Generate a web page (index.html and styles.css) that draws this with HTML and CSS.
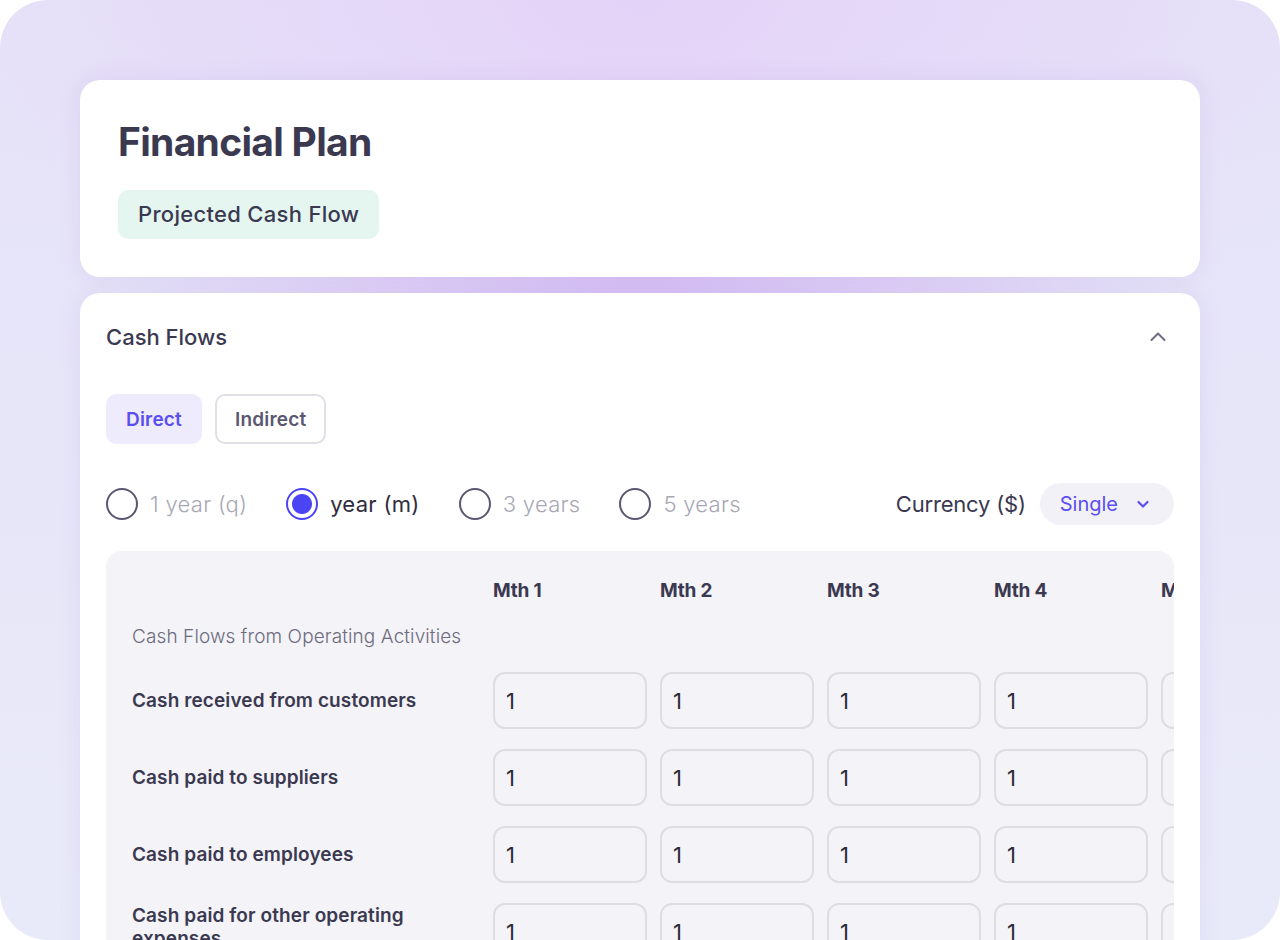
FILE: index.html
```html
<!DOCTYPE html>
<html lang="en">
<head>
  <meta charset="UTF-8">
  <title>Financial Plan – Projected Cash Flow</title>
  <link rel="stylesheet" href="styles.css">
</head>
<body>

  <div class="frame">

    <div class="card planCard">
      <h1>Financial Plan</h1>
      <span class="badge">Projected Cash Flow</span>
    </div>

    <div class="card flowCard">
      <div class="flowHead">
        <h2>Cash Flows</h2>
        <svg class="collapseIcon" width="18" height="18" viewBox="0 0 18 18"><path d="M2.5 12 L9 5.5 L15.5 12" fill="none" stroke="#6e6c7e" stroke-width="2" stroke-linecap="round" stroke-linejoin="round"/></svg>
      </div>

      <div class="tabs">
        <button class="tab active">Direct</button>
        <button class="tab">Indirect</button>
      </div>

      <div class="options">
        <div class="periods">
          <label class="period"><span class="radio"></span>1 year (q)</label>
          <label class="period on"><span class="radio"></span>year (m)</label>
          <label class="period"><span class="radio"></span>3 years</label>
          <label class="period"><span class="radio"></span>5 years</label>
        </div>
        <div class="currency">
          <span>Currency ($)</span>
          <button class="select">Single
            <svg width="14" height="14" viewBox="0 0 14 14"><path d="M2.5 5 L7 9.5 L11.5 5" fill="none" stroke="#5b4ef0" stroke-width="2.2" stroke-linecap="round" stroke-linejoin="round"/></svg>
          </button>
        </div>
      </div>

      <div class="sheet">
        <div class="grid">
          <div class="row head">
            <span></span>
            <span>Mth 1</span><span>Mth 2</span><span>Mth 3</span><span>Mth 4</span><span>Mth 5</span>
          </div>
          <div class="section">Cash Flows from Operating Activities</div>
          <div class="row">
            <span class="label">Cash received from customers</span>
            <input value="1"><input value="1"><input value="1"><input value="1"><input value="1">
          </div>
          <div class="row">
            <span class="label">Cash paid to suppliers</span>
            <input value="1"><input value="1"><input value="1"><input value="1"><input value="1">
          </div>
          <div class="row">
            <span class="label">Cash paid to employees</span>
            <input value="1"><input value="1"><input value="1"><input value="1"><input value="1">
          </div>
          <div class="row">
            <span class="label long">Cash paid for other operating expenses</span>
            <input value="1"><input value="1"><input value="1"><input value="1"><input value="1">
          </div>
        </div>
      </div>
    </div>

  </div>

</body>
</html>
```

FILE: styles.css
```css
body {
  margin: 0;
  background: #fff;
  font-family: Inter, "Noto Sans", sans-serif;
  color: #3b3950;
}
.frame {
  width: 1280px;
  height: 940px;
  box-sizing: border-box;
  padding: 80px 80px 0;
  border-radius: 48px;
  overflow: hidden;
  background:
    radial-gradient(ellipse 520px 90px at 50% 285px, rgba(214,190,244,0.95), rgba(214,190,244,0) 100%),
    radial-gradient(ellipse 700px 360px at 50% 0, #e4d3f8, rgba(228,211,248,0) 100%),
    linear-gradient(180deg, #e6e2f8, #e8eaf9);
}
.card {
  background: #fff;
  border-radius: 20px;
  box-shadow: 0 0 22px rgba(130,110,200,0.12);
}
.planCard {
  padding: 38px 38px;
}
h1 {
  margin: 0 0 24px;
  font-size: 39px;
  line-height: 48px;
  font-weight: 700;
  letter-spacing: -0.7px;
}
.badge {
  display: inline-block;
  height: 49px;
  line-height: 49px;
  padding: 0 20px;
  border-radius: 10px;
  background: #e5f6f0;
  font-size: 22px;
  font-weight: 500;
  letter-spacing: 0.3px;
}
.flowCard {
  margin-top: 16px;
  padding: 26px 26px 0;
  height: 700px;
}
.flowHead {
  display: flex;
  align-items: center;
  justify-content: space-between;
  height: 36px;
}
h2 {
  margin: 0;
  font-size: 22px;
  font-weight: 500;
  letter-spacing: 0;
}
.collapseIcon {
  margin-right: 7px;
}
.tabs {
  display: flex;
  gap: 13px;
  margin-top: 39px;
}
.tab {
  height: 50px;
  padding: 0 18px;
  border: 2px solid #e0dfe6;
  border-radius: 10px;
  background: #fff;
  font-family: inherit;
  font-size: 19px;
  font-weight: 600;
  color: #5a5870;
  letter-spacing: 0.2px;
}
.tab.active {
  background: #eeebfd;
  border-color: #eeebfd;
  color: #5b4ef0;
}
.options {
  display: flex;
  align-items: center;
  justify-content: space-between;
  height: 42px;
  margin-top: 39px;
}
.periods {
  display: flex;
  gap: 39px;
}
.period {
  display: flex;
  align-items: center;
  gap: 12px;
  font-size: 22px;
  font-weight: 300;
  color: #a9a8b5;
  letter-spacing: 0.3px;
}
.period.on {
  color: #2f2d40;
  font-weight: 400;
}
.radio {
  width: 28px;
  height: 28px;
  border: 2px solid #5a5870;
  border-radius: 50%;
  box-sizing: content-box;
}
.period.on .radio {
  border-color: #4b44f5;
  background: radial-gradient(circle, #4b44f5 0 9.5px, #fff 10.5px);
}
.currency {
  display: flex;
  align-items: center;
  gap: 14px;
  font-size: 22px;
  letter-spacing: -0.2px;
}
.select {
  display: flex;
  align-items: center;
  gap: 18px;
  height: 42px;
  padding: 0 24px 0 20px;
  border: 0;
  border-radius: 21px;
  background: #f2f1f8;
  font-family: inherit;
  font-size: 20px;
  color: #5b4ef0;
  letter-spacing: 0;
}
.sheet {
  margin-top: 26px;
  height: 500px;
  background: #f3f3f8;
  border-radius: 16px 16px 0 0;
  overflow: hidden;
  padding: 27px 0 0 26px;
}
.grid {
  width: max-content;
}
.row {
  display: grid;
  grid-template-columns: 348px repeat(5, 154px);
  column-gap: 13px;
  align-items: center;
  height: 57px;
  margin-top: 20px;
}
.row.head {
  height: 24px;
  margin-top: 0;
  font-size: 19px;
  font-weight: 700;
  letter-spacing: -0.2px;
}
.section {
  margin-top: 23px;
  line-height: 24px;
  font-size: 19px;
  font-weight: 300;
  color: #6d6b7d;
  letter-spacing: 0.1px;
}
.section + .row {
  margin-top: 23px;
}
.label {
  padding-right: 40px;
  font-size: 19px;
  font-weight: 600;
  line-height: 23px;
  letter-spacing: 0.1px;
}
/* two-line labels sit at the top of their row */
.label.long {
  align-self: start;
  padding-top: 1px;
}
input {
  width: 154px;
  height: 57px;
  box-sizing: border-box;
  padding: 0 11px;
  border: 2px solid #dedde4;
  border-radius: 12px;
  background: #f3f3f8;
  font-family: inherit;
  font-size: 22px;
  color: #2a2a35;
}
```
